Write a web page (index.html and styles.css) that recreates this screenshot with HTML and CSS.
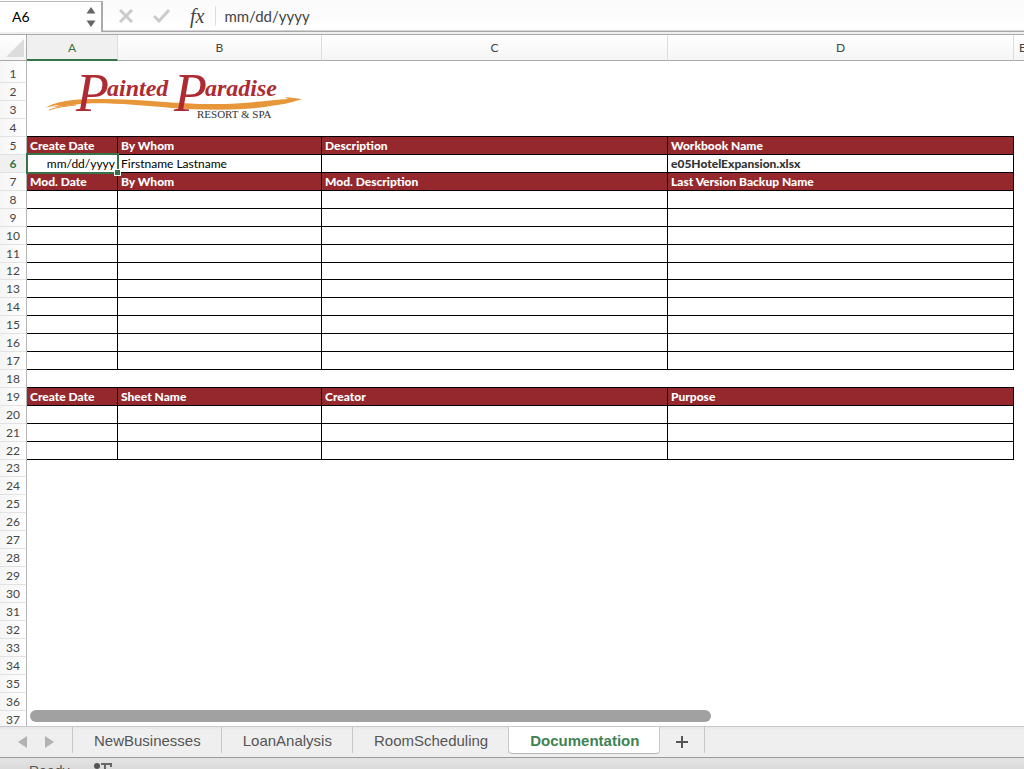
FILE: index.html
```html
<!DOCTYPE html>
<html lang="en">
<head>
    <meta charset="UTF-8">
    <meta name="viewport" content="width=device-width, initial-scale=1.0">
    <title>e05HotelExpansion.xlsx</title>
    <link rel="stylesheet" href="styles.css">
</head>
<body>
    <div class="formula-bar">
        <div class="name-box">
            <input type="text" value="A6" aria-label="Name box">
            <svg width="10" height="20" viewBox="0 0 10 20" fill="#666"><path d="M5 0l4.5 6.500h-9zM5 20l4.500-6.500h-9z"/></svg>
        </div>
        <button class="bar-btn" aria-label="Cancel">
            <svg width="14" height="14" viewBox="0 0 14 14" stroke="#cbcbcb" stroke-width="3" fill="none"><path d="M1 1l12 12M13 1L1 13"/></svg>
        </button>
        <button class="bar-btn" aria-label="Enter">
            <svg width="17" height="14" viewBox="0 0 17 14" stroke="#cbcbcb" stroke-width="3" fill="none"><path d="M1 7l5 5L16 1"/></svg>
        </button>
        <button class="bar-btn fx" aria-label="Insert function">fx</button>
        <input class="formula" type="text" value="mm/dd/yyyy" aria-label="Formula">
    </div>

    <div class="sheet">
        <table>
            <colgroup>
                <col class="col-num"><col class="col-a"><col class="col-b"><col class="col-c"><col class="col-d"><col>
            </colgroup>
            <thead>
                <tr>
                    <th class="corner"><svg width="18" height="18" viewBox="0 0 18 18"><path d="M18 0v18H0z" fill="#dcdcdc"/></svg></th>
                    <th class="selected">A</th>
                    <th>B</th>
                    <th>C</th>
                    <th>D</th>
                    <th class="last">E</th>
                </tr>
            </thead>
            <tbody id="rows"></tbody>
        </table>

        <svg class="logo" width="262" height="54" viewBox="0 0 262 54" role="img" aria-label="Painted Paradise Resort &amp; Spa">
            <path d="M3 40C12 34 30 31 52 31C92 30 130 36 172 36C205 36 228 32 246 31L243 29L260 31C248 35 238 37 228 38C203 43 160 42 130 40C95 37 62 34 38 36C28 37 18 39 10 39L18 37C12 37 7 39 3 40z" fill="#e8963a"/>
            <path d="M7 42c9-3 17-4 27-5" stroke="#e8963a" fill="none"/>
            <g class="logo-name">
                <text class="logo-cap" x="34" y="43">P</text>
                <text x="65" y="28">ainted</text>
                <text class="logo-cap" x="132" y="43">P</text>
                <text x="163" y="28">aradise</text>
            </g>
            <text class="logo-sub" x="155" y="50">RESORT &amp; SPA</text>
        </svg>
        <div class="scrollbar"></div>
    </div>

    <div class="tabs">
        <div class="tab-arrows">
            <button aria-label="Previous sheet"><svg width="9" height="12" viewBox="0 0 9 12"><path d="M9 0v12L0 6z" fill="#b3b3b3"/></svg></button>
            <button aria-label="Next sheet"><svg width="9" height="12" viewBox="0 0 9 12"><path d="M0 0v12l9-6z" fill="#b3b3b3"/></svg></button>
        </div>
        <button class="tab">NewBusinesses</button>
        <button class="tab">LoanAnalysis</button>
        <button class="tab">RoomScheduling</button>
        <button class="tab active">Documentation</button>
        <button class="tab add" aria-label="Add sheet"><svg width="12" height="12" viewBox="0 0 12 12" stroke="#555" stroke-width="2"><path d="M6 0v12M0 6h12"/></svg></button>
    </div>

    <div class="status">
        <span>Ready</span>
        <svg width="20" height="16" viewBox="0 0 20 16"><circle cx="4" cy="4" r="3" fill="#555"/><path d="M8 2h10v3M12 2v12" stroke="#666" stroke-width="2" fill="none"/></svg>
    </div>

    <script>
        const ROWS = 37;
        // header rows of the two tables and the filled in cells
        const headers = {
            5: ["Create Date", "By Whom", "Description", "Workbook Name"],
            7: ["Mod. Date", "By Whom", "Mod. Description", "Last Version Backup Name"],
            19: ["Create Date", "Sheet Name", "Creator", "Purpose"]
        };
        const values = {
            6: ["mm/dd/yyyy", "Firstname Lastname", "", "e05HotelExpansion.xlsx"]
        };

        let html = "";
        for (let n = 1; n <= ROWS; n++) {
            const cells = headers[n] || values[n] || ["", "", "", ""];
            let cls = "";
            if (headers[n]) {
                cls = "head";
            } else if ((n > 5 && n < 18) || (n > 19 && n < 23)) {
                cls = "boxed";
            } else if (n === 4 || n === 18) {
                cls = "above";
            }
            if (n === 6) cls += " current";
            if (n === 1) cls = "tall";
            if (n === 12 || n === 23) cls += " short";
            html += `<tr class="${cls}"><th>${n}</th>`;
            cells.forEach(text => html += `<td>${text}</td>`);
            html += `<td></td></tr>`;
        }
        document.getElementById("rows").innerHTML = html;
    </script>
</body>
</html>
```
FILE: styles.css
```css
* {
    box-sizing: border-box;
}
body {
    margin: 0;
    height: 100vh;
    display: flex;
    flex-direction: column;
    overflow: hidden;
    background: #fff;
    font-family: Lato, "Liberation Sans", sans-serif;
    color: #000;
}
button, input {
    font-family: inherit;
    border: none;
    background: none;
    padding: 0;
    margin: 0;
}

/* formula bar */
.formula-bar {
    flex: none;
    display: flex;
    align-items: center;
    height: 35px;
    padding-bottom: 3px;
    background: linear-gradient(#fafafa, #fff 30px, #aaa 31px, #aaa 32px, #eee 32px, #eee 34px, #aaa 34px);
}
.name-box {
    display: flex;
    align-items: center;
    width: 103px;
    height: 31px;
    padding: 0 5px 0 12px;
    background: #fff;
    border: 1px solid #bbb;
    border-left: none;
    border-right: 2px solid #aaa;
    border-bottom: none;
}
.name-box input {
    flex: 1;
    min-width: 0;
    font-size: 14px;
}
.bar-btn {
    display: flex;
    margin-left: 16px;
}
.bar-btn + .bar-btn {
    margin-left: 20px;
}
.fx {
    font: italic 20px/24px "Liberation Serif", serif;
    color: #444;
}
.formula {
    flex: 1;
    min-width: 0;
    height: 20px;
    margin-left: 11px;
    padding-left: 8px;
    border-left: 1px solid #ddd;
    font-size: 15px;
    color: #444;
}

/* grid */
.sheet {
    flex: 1;
    min-height: 0;
    position: relative;
    overflow: hidden;
}
table {
    width: 100%;
    table-layout: fixed;
    border-collapse: separate;
    border-spacing: 0;
    font-size: 12px;
    line-height: 17px;
}
.col-num { width: 27px; }
.col-a { width: 91px; }
.col-b { width: 204px; }
.col-c, .col-d { width: 346px; }
th, td {
    height: 18px;
    padding: 0;
    white-space: nowrap;
    vertical-align: bottom;
    overflow: hidden;
}
thead th {
    height: 26px;
    vertical-align: middle;
    background: linear-gradient(#fff, #f5f5f5);
    border-right: 1px solid #ddd;
    border-bottom: 1px solid #aaa;
    font-weight: normal;
    color: #444;
}
thead .corner {
    border-right-color: #aaa;
    text-align: right;
    padding-right: 2px;
    line-height: 0;
}
thead .selected {
    background: #f0f0f0;
    border-bottom: 2px solid #367348;
    color: #367348;
}
thead .last {
    text-align: left;
    padding-left: 5px;
    border-right: none;
}
tbody th {
    background: linear-gradient(to right, #f5f5f5, #fff);
    border-right: 1px solid #b5b5b5;
    border-bottom: 1px solid #e2e2e2;
    font-weight: normal;
    font-size: 12px;
    color: #444;
}
td {
    padding: 0 2px 0 3px;
}
.tall th, .tall td {
    height: 22px;
}
.short th, .short td {
    height: 17px;
    line-height: 16px;
}
.above td:not(:last-child),
.head td:not(:last-child),
.boxed td:not(:last-child) {
    border-bottom: 1px solid #000;
}
.head td:not(:last-child),
.boxed td:not(:last-child) {
    border-right: 1px solid #000;
}
.head td:not(:last-child) {
    background: #94282c;
    color: #fff;
    font-weight: 900;
}
.current th {
    color: #367348;
    background: #f0f0f0;
    font-weight: bold;
}
.current td:nth-child(2) {
    position: relative;
    z-index: 1;
    overflow: visible;
    text-align: right;
}
.current td:nth-child(2)::before {
    content: "";
    position: absolute;
    inset: -2px -2px -2px -1px;
    border: 2px solid #367348;
}
.current td:nth-child(2)::after {
    content: "";
    position: absolute;
    right: -3px;
    bottom: -3px;
    width: 5px;
    height: 5px;
    background: #367348;
    outline: 1px solid #fff;
}
.current td:nth-child(5) {
    font-weight: 900;
    color: #333;
}
.logo {
    position: absolute;
    left: 42px;
    top: 33px;
    overflow: visible;
}
.logo-name {
    font: italic bold 24px "Liberation Serif", serif;
    fill: #ae2b34;
}
.logo-cap {
    font-size: 54px;
    font-weight: normal;
}
.logo-sub {
    font: 11px "Liberation Serif", serif;
    fill: #333;
}
.scrollbar {
    position: absolute;
    left: 30px;
    bottom: 4px;
    width: 66.5%;
    height: 12px;
    border-radius: 6px;
    background: #a1a1a1;
}

/* sheet tabs */
.tabs {
    flex: none;
    display: flex;
    align-items: flex-start;
    height: 32px;
    border-top: 1px solid #c8c8c8;
    border-bottom: 1px solid #999;
    background: linear-gradient(#e8e8e8, #efefef 4px);
}
.tab-arrows {
    display: flex;
    align-items: center;
    gap: 18px;
    width: 73px;
    height: 26px;
    padding: 4px 0 0 18px;
    border-right: 1px solid #c8c8c8;
}
.tab-arrows button {
    display: flex;
}
.tab {
    height: 26px;
    padding: 1px 20px 0 21px;
    border-right: 1px solid #c8c8c8;
    font-family: "Liberation Sans", Arial, sans-serif;
    font-size: 15px;
    color: #555;
}
.tab.active {
    height: 27px;
    background: #fff;
    border-bottom: 1px solid #b5b5b5;
    border-radius: 0 0 4px 4px;
    font-weight: bold;
    color: #3f8354;
}
.add {
    display: flex;
    align-items: center;
    justify-content: center;
    width: 45px;
    padding: 3px 0 0;
}

/* status bar, cut by the window edge */
.status {
    flex: none;
    display: flex;
    gap: 24px;
    height: 11px;
    padding: 4px 0 0 29px;
    overflow: hidden;
    background: linear-gradient(#e4e4e4, #dadada);
    font: 14px/18px "Liberation Sans", Arial, sans-serif;
    color: #555;
}
.status svg {
    flex: none;
}
```
